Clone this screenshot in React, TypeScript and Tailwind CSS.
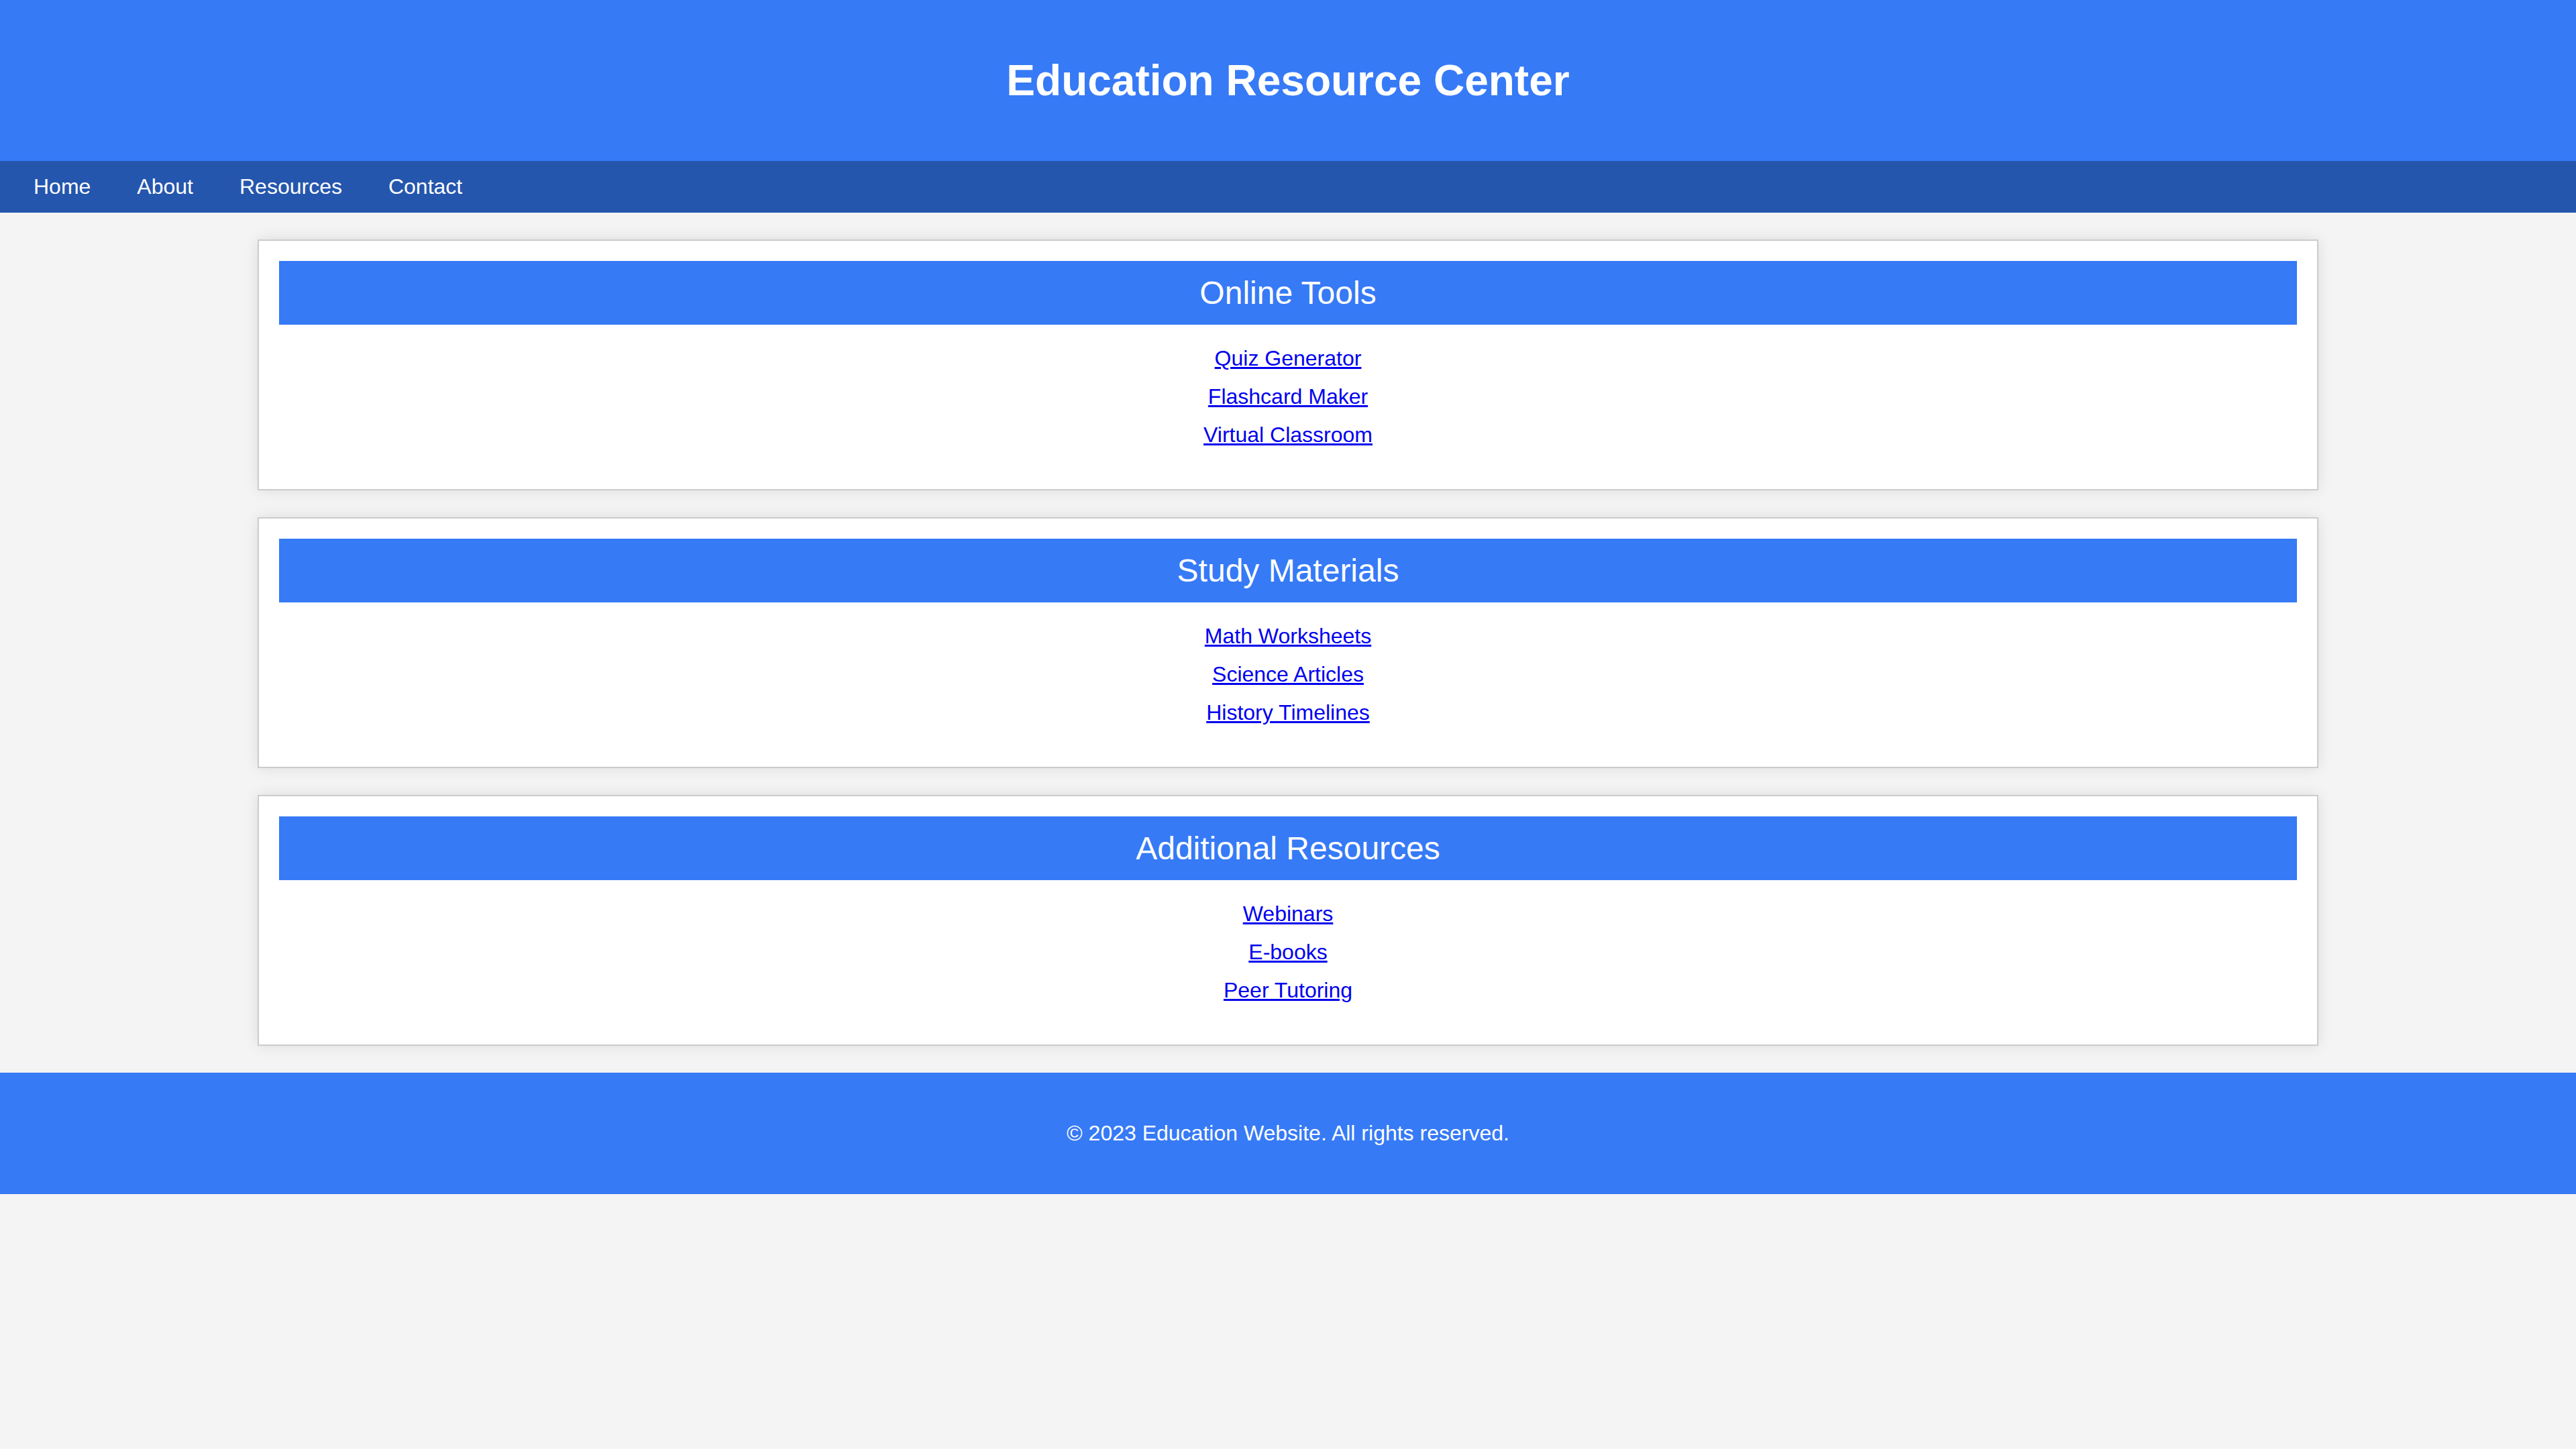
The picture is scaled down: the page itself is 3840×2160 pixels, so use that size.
import React from "react";

const sections = [
  { title: "Online Tools", links: ["Quiz Generator", "Flashcard Maker", "Virtual Classroom"] },
  { title: "Study Materials", links: ["Math Worksheets", "Science Articles", "History Timelines"] },
  { title: "Additional Resources", links: ["Webinars", "E-books", "Peer Tutoring"] },
];

export default function App() {
  return (
    <div className="min-h-screen bg-[#f4f4f4] font-['Liberation_Sans',Arial,sans-serif] text-black">
      <header className="bg-[#367af6] py-[40px] text-center text-white">
        <h1 className="my-[43px] text-[64px] font-bold leading-[74px]">Education Resource Center</h1>
      </header>
      <nav className="flex gap-[69px] bg-[#2556ad] py-[20px] pl-[50px] text-[32px] leading-[37px] text-white">
        <a href="#">Home</a>
        <a href="#">About</a>
        <a href="#">Resources</a>
        <a href="#">Contact</a>
      </nav>
      <main className="mx-auto flex w-[80%] flex-col gap-[40px] py-[40px]">
        {sections.map((s) => (
          <section
            key={s.title}
            className="border-2 border-[#cccccc] bg-white p-[30px] shadow-[0_0_20px_rgba(0,0,0,0.1)]"
          >
            <h2 className="bg-[#367af6] py-[20px] text-center text-[48px] font-normal leading-[55px] text-white">
              {s.title}
            </h2>
            <ul className="my-[32px] flex flex-col gap-[20px] text-center text-[32px] leading-[37px]">
              {s.links.map((l) => (
                <li key={l}>
                  <a href="#" className="text-[#0000ee] underline">
                    {l}
                  </a>
                </li>
              ))}
            </ul>
          </section>
        ))}
      </main>
      <footer className="bg-[#367af6] py-[40px] text-center text-white">
        <p className="my-[32px] text-[32px] leading-[37px]">© 2023 Education Website. All rights reserved.</p>
      </footer>
    </div>
  );
}
